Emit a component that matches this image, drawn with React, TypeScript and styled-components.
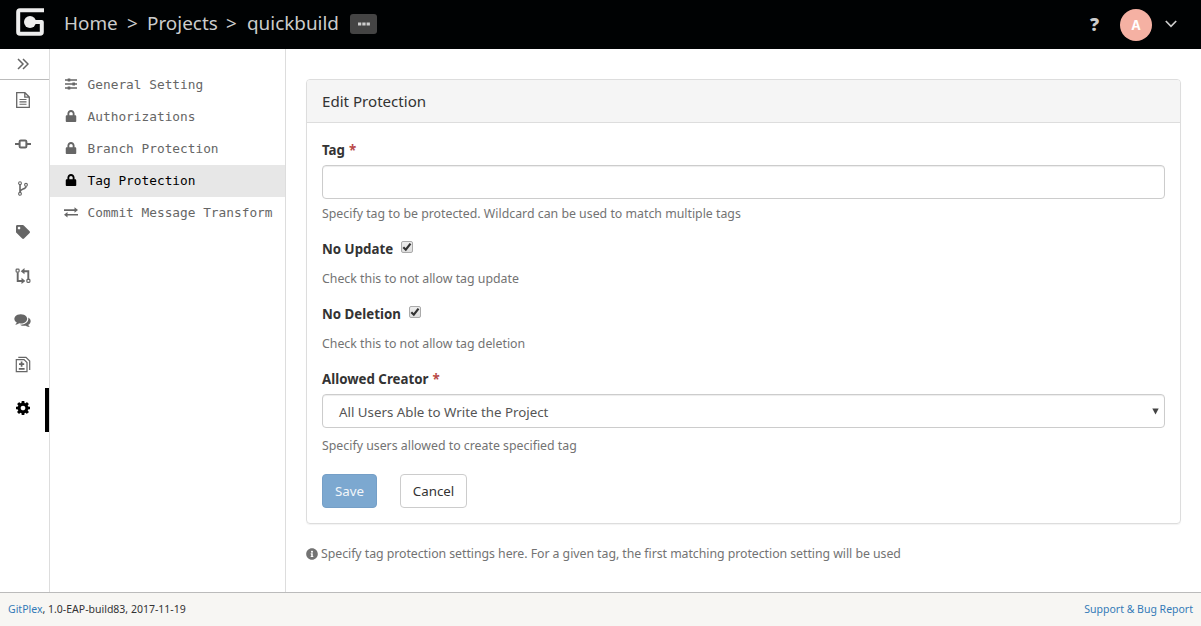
import React from "react";
import styled, { createGlobalStyle } from "styled-components";
import { FaTag, FaLock, FaInfoCircle } from "react-icons/fa";

const Global = createGlobalStyle`
  * { box-sizing: border-box; }
  html, body { margin: 0; padding: 0; }
  body {
    font-family: "Noto Sans", "Open Sans", sans-serif;
    font-size: 13.3px;
    line-height: 20px;
    color: #333;
    background: #fff;
  }
  svg { display: block; }
`;

const Page = styled.div`
  display: flex;
  flex-direction: column;
  height: 626px;
  overflow: hidden;
`;

const Header = styled.header`
  display: flex;
  align-items: center;
  height: 49px;
  flex: none;
  padding: 0 24px 0 15px;
  background: #000203;
  color: #ccc;
`;

const Logo = styled.svg`
  width: 30px;
  height: 30px;
  margin-bottom: 5px;
`;

const Breadcrumb = styled.nav`
  display: flex;
  align-items: center;
  margin: 0 auto 3px 19px;
  font-size: 18.9px;
  line-height: 26px;
`;

const Crumb = styled.span<{ $width: number }>`
  width: ${(p) => p.$width}px;
  white-space: nowrap;
`;

const MoreButton = styled.button`
  display: flex;
  align-items: center;
  justify-content: center;
  width: 27px;
  height: 20px;
  margin-top: 2px;
  padding: 0;
  border: 0;
  border-radius: 3px;
  background: #444;
  color: #ccc;
`;

const Help = styled.span`
  margin: 0 19px 2px 0;
  font-family: "Open Sans", sans-serif;
  font-size: 18px;
  font-weight: 800;
  width: 11px;
`;

const Avatar = styled.span`
  display: flex;
  align-items: center;
  justify-content: center;
  width: 32px;
  height: 32px;
  margin-right: 13px;
  padding-top: 4px;
  border-radius: 50%;
  background: #f5b1a3;
  color: #fff;
  font: 700 15px "Liberation Mono", monospace;
`;

const Body = styled.div`
  display: flex;
  flex: 1;
  min-height: 0;
`;

const Rail = styled.aside`
  width: 50px;
  border-right: 1px solid #ddd;
`;

const RailToggle = styled.div`
  display: flex;
  align-items: center;
  justify-content: center;
  height: 31px;
  padding-right: 3px;
  border-bottom: 1px solid #bbb;
  color: #666;
`;

const RailItem = styled.a<{ $active?: boolean }>`
  display: flex;
  align-items: center;
  justify-content: center;
  height: 44px;
  padding: 0 ${(p) => (p.$active ? 0 : 4)}px 4px 0;
  border-right: ${(p) => (p.$active ? "4px solid #000" : "0")};
  color: ${(p) => (p.$active ? "#000" : "#666")};
`;

const Menu = styled.nav`
  width: 236px;
  padding-top: 20px;
  border-right: 1px solid #ddd;
`;

const MenuItem = styled.a<{ $active?: boolean }>`
  display: flex;
  align-items: center;
  height: 32px;
  padding: 0 0 2px 13px;
  font: 12.8px "DejaVu Sans Mono", monospace;
  white-space: nowrap;
  color: ${(p) => (p.$active ? "#000" : "#666")};
  background: ${(p) => (p.$active ? "#e7e7e7" : "transparent")};
`;

const MenuIcon = styled.span`
  display: flex;
  justify-content: center;
  width: 16px;
  margin-right: 8.600px;
`;

const Main = styled.main`
  flex: 1;
  padding: 30px 20px 0;
`;

const Panel = styled.section`
  border: 1px solid #ddd;
  border-radius: 4px;
  box-shadow: 0 1px 1px rgba(0, 0, 0, 0.05);
`;

const PanelHeading = styled.h3`
  height: 43px;
  margin: 0;
  padding: 0 15px;
  border-bottom: 1px solid #ddd;
  border-radius: 3px 3px 0 0;
  background: #f5f5f5;
  font-size: 15.1px;
  font-weight: 400;
  line-height: 43px;
`;

const Form = styled.form`
  padding: 17px 15px 15px;
`;

const Field = styled.div<{ $after?: number }>`
  margin-bottom: ${(p) => p.$after ?? 15}px;
`;

const Label = styled.label`
  display: flex;
  height: 20px;
  font-size: 13.3px;
  font-weight: 700;
`;

const Required = styled.span`
  margin-left: 4px;
  color: #b94a48;
`;

const Hint = styled.p<{ $gap: number }>`
  margin: ${(p) => p.$gap}px 0 0;
  font-size: 12.33px;
  color: #737373;
`;

const Control = styled.div`
  display: flex;
  align-items: center;
  justify-content: space-between;
  height: 34px;
  margin-top: 5px;
  padding: 1px 5px 0 16px;
  border: 1px solid #ccc;
  border-radius: 4px;
  box-shadow: inset 0 1px 1px rgba(0, 0, 0, 0.075);
  color: #555;
`;

const CheckBox = styled.span`
  display: flex;
  align-items: center;
  justify-content: center;
  width: 12px;
  height: 12px;
  margin: 2px 0 0 8px;
  border: 1px solid #aaa;
  border-radius: 2px;
  background: linear-gradient(#ededed, #dedede);
`;

const Actions = styled.div`
  display: flex;
  gap: 23px;
`;

const Button = styled.button<{ $primary?: boolean }>`
  width: ${(p) => (p.$primary ? 55 : 67)}px;
  height: 34px;
  padding: 0;
  border: 1px solid ${(p) => (p.$primary ? "#759fc7" : "#ccc")};
  border-radius: 4px;
  background: ${(p) => (p.$primary ? "#7ca8d0" : "#fff")};
  color: ${(p) => (p.$primary ? "#f2f6fa" : "#333")};
  font: 13.3px/20px "Noto Sans", sans-serif;
`;

const Note = styled.p`
  display: flex;
  align-items: center;
  gap: 3px;
  margin: 20px 0 0;
  font-size: 12.33px;
  letter-spacing: -0.05px;
  color: #737373;
`;

const Footer = styled.footer`
  display: flex;
  align-items: center;
  justify-content: space-between;
  flex: none;
  height: 34px;
  padding: 0 8px 1px;
  border-top: 1px solid #bbb;
  background: #f7f6f3;
  font-size: 10.5px;
`;

const Link = styled.a`
  color: #337ab7;
`;

const FileIcon = () => (
  <svg width="16" height="18" viewBox="0 0 16 18" fill="none" stroke="currentColor" strokeWidth="1.3">
    <path d="M1.7 1.7h8.2l4.4 4.4v10.2H1.7zM9.8 1.7v4.5h4.5" />
    <path d="M4.5 8.5h7M4.5 10.9h7M4.5 13.300h7" strokeWidth="1.1" />
  </svg>
);

const CommitIcon = () => (
  <svg width="16" height="10" viewBox="0 0 16 10" fill="none" stroke="currentColor" strokeWidth="2">
    <rect x="4.6" y="1.5" width="6.8" height="7" rx="1.2" />
    <path d="M0 5h4.5M11.5 5H16" />
  </svg>
);

const BranchIcon = () => (
  <svg width="10" height="15" viewBox="0 0 10 15" fill="none" stroke="currentColor" strokeWidth="1.1">
    <circle cx="2" cy="2.2" r="1.4" />
    <circle cx="2" cy="12.8" r="1.4" />
    <circle cx="8" cy="3.8" r="1.4" />
    <path d="M2 3.6v7.8M8 5.2c0 3.6-5.6 2.2-6 5.6" strokeWidth="1.6" />
  </svg>
);

const PullRequestIcon = () => (
  <svg width="16" height="16" viewBox="0 0 16 16" fill="none" stroke="currentColor">
    <rect x="1.1" y="1.1" width="3" height="3" rx="0.8" strokeWidth="1.2" />
    <rect x="11.9" y="11.4" width="3" height="3" rx="0.8" strokeWidth="1.2" />
    <path d="M2.7 4.5v8.500h5M13.300 11.200V3.200H8.300" strokeWidth="1.9" />
    <path d="M6.500 9.800v6.200l3.800-3.100zM9.500 0.100v6.200L5.700 3.200z" fill="currentColor" stroke="none" />
  </svg>
);

const CommentsIcon = () => (
  <svg width="17" height="14" viewBox="0 0 1792 1536" fill="currentColor">
    <path d="M1408 640q0 139-94 257t-256.500 186.500T704 1152q-86 0-176-16-124 88-278 128-36 9-86 16h-3q-11 0-20.500-8t-11.500-21q-1-3-1-6.500t.5-6.500 2-6l2.500-5 3.500-5.500 4-5 4.500-5 4-4.500q5-6 23-25t26-29.500 22.500-29 25-38.500 20.500-44Q142 981 71 875T0 640q0-139 94-257t256.500-186.500T704 128t353.500 68.500T1314 383t94 257zm384 256q0 120-71 224.500T1526 1297q10 24 20.500 44t25 38.500 22.500 29 26 29.500 23 25q1 1 4 4.500t4.500 5 4 5 3.500 5.500l2.500 5 2 6 .5 6.500-1 6.500q-3 14-13 22t-22 7q-50-7-86-16-154-40-278-128-90 16-176 16-271 0-472-132 58 4 88 4 161 0 309-45t264-129q125-92 192-212t67-254q0-77-23-152 129 71 204 178t75 230z" />
  </svg>
);

const CompareIcon = () => (
  <svg width="16" height="17" viewBox="0 0 16 17" fill="none" stroke="currentColor" strokeWidth="1.2">
    <path d="M1.300 3.600h7.700l3 3v9.100H1.300z" />
    <path d="M3.300 1.300h7.700l3.700 3.700v9.100" />
    <path d="M6.600 5.500v5.200M4 8.100h5.200M3.800 12.900h5.800" strokeWidth="1.700" />
  </svg>
);

const CogIcon = () => (
  <svg width="14" height="14" viewBox="0 0 1536 1536" fill="currentColor">
    <path d="M1024 768q0-106-75-181t-181-75-181 75-75 181 75 181 181 75 181-75 75-181zm512-109v222q0 12-8 23t-20 13l-185 28q-19 54-39 91 35 50 107 138 10 12 10 25t-9 23q-27 37-99 108t-94 71q-12 0-26-9l-138-108q-44 23-91 38-16 136-29 186-7 28-36 28H657q-14 0-24.500-8.500T621 1506l-28-184q-49-16-90-37l-141 107q-10 9-25 9-14 0-25-11-126-114-165-168-7-10-7-23 0-12 8-23 15-21 51-66.500t54-70.500q-27-50-41-99L29 913q-13-2-21-12.500T0 877V655q0-12 8-23t19-13l186-28q14-46 39-92-40-57-107-138-10-12-10-24 0-10 9-23 26-36 98.500-107.500T337 135q13 0 26 10l138 107q44-23 91-38 16-136 29-186 7-28 36-28h222q14 0 24.500 8.500T915 30l28 184q49 16 90 37l142-107q9-9 24-9 13 0 25 10 129 119 165 170 7 8 7 22 0 12-8 23-15 21-51 66.500t-54 70.500q26 50 41 98l183 28q13 2 21 12.500t8 23.500z" />
  </svg>
);

const SlidersIcon = () => (
  <svg width="12" height="12" viewBox="0 0 12 12" fill="none" stroke="currentColor">
    <path d="M0 2h12M0 6h12M0 10h12" strokeWidth="1.3" />
    <path d="M4 .5v3M8.700 4.500v3M4 8.500v3" strokeWidth="2.600" />
  </svg>
);

const ExchangeIcon = () => (
  <svg width="14" height="11" viewBox="0 0 14 11" fill="currentColor">
    <path d="M0 2.200h10.500V.2L14 3l-3.500 2.800V3.900H0zM14 6.900H3.500V5L0 7.800l3.500 2.800V8.600H14z" />
  </svg>
);

const LockIcon = () => <FaLock size={12} />;

const RAIL = [
  FileIcon,
  CommitIcon,
  BranchIcon,
  () => <FaTag size={14} />,
  PullRequestIcon,
  CommentsIcon,
  CompareIcon,
  CogIcon,
];

const MENU = [
  { text: "General Setting", Icon: SlidersIcon },
  { text: "Authorizations", Icon: LockIcon },
  { text: "Branch Protection", Icon: LockIcon },
  { text: "Tag Protection", Icon: LockIcon, active: true },
  { text: "Commit Message Transform", Icon: ExchangeIcon },
];

const Checked = () => (
  <CheckBox role="checkbox" aria-checked="true">
    <svg width="10" height="10" viewBox="0 0 10 10" fill="none" stroke="#333" strokeWidth="2.2">
      <path d="M1.300 5.300l2.500 2.400L8.500 1.600" />
    </svg>
  </CheckBox>
);

export default function App() {
  return (
    <Page>
      <Global />
      <Header>
        <Logo viewBox="0 0 30 30" fill="none" stroke="#eee" strokeWidth="4">
          <path d="M29 3.200H5Q3.200 3.200 3.200 5V25Q3.200 26.800 5 26.800H25Q26.800 26.800 26.800 25V14.900H15" strokeLinejoin="round" />
          <circle cx="15" cy="15" r="6" fill="#eee" stroke="none" />
        </Logo>
        <Breadcrumb>
          <Crumb $width={63}>Home</Crumb>
          <Crumb $width={20}>&gt;</Crumb>
          <Crumb $width={79}>Projects</Crumb>
          <Crumb $width={21}>&gt;</Crumb>
          <Crumb $width={103}>quickbuild</Crumb>
          <MoreButton>
            <svg width="12" height="4" viewBox="0 0 12 4" fill="currentColor">
              <path d="M0 .5h3.300v3H0zM4.300 .5h3.300v3H4.300zM8.600 .5h3.300v3H8.600z" />
            </svg>
          </MoreButton>
        </Breadcrumb>
        <Help>?</Help>
        <Avatar>A</Avatar>
        <svg width="12" height="10" viewBox="0 0 12 10" fill="none" stroke="#ccc" strokeWidth="1.7">
          <path d="M.8 1L6 6.300 11.200 1" />
        </svg>
      </Header>
      <Body>
        <Rail>
          <RailToggle>
            <svg width="12" height="12" viewBox="0 0 12 12" fill="none" stroke="currentColor" strokeWidth="1.500">
              <path d="M1 1l5 5-5 5M6 1l5 5-5 5" />
            </svg>
          </RailToggle>
          {RAIL.map((Icon, i) => (
            <RailItem key={i} $active={i === RAIL.length - 1}>
              <Icon />
            </RailItem>
          ))}
        </Rail>
        <Menu>
          {MENU.map(({ text, Icon, active }) => (
            <MenuItem key={text} $active={active}>
              <MenuIcon>
                <Icon />
              </MenuIcon>
              {text}
            </MenuItem>
          ))}
        </Menu>
        <Main>
          <Panel>
            <PanelHeading>Edit Protection</PanelHeading>
            <Form>
              <Field>
                <Label>
                  Tag<Required>*</Required>
                </Label>
                <Control />
                <Hint $gap={5}>Specify tag to be protected. Wildcard can be used to match multiple tags</Hint>
              </Field>
              <Field>
                <Label>
                  No Update
                  <Checked />
                </Label>
                <Hint $gap={10}>Check this to not allow tag update</Hint>
              </Field>
              <Field>
                <Label>
                  No Deletion
                  <Checked />
                </Label>
                <Hint $gap={10}>Check this to not allow tag deletion</Hint>
              </Field>
              <Field $after={18}>
                <Label>
                  Allowed Creator<Required>*</Required>
                </Label>
                <Control>
                  All Users Able to Write the Project
                  <svg width="7" height="7" viewBox="0 0 7 7" fill="#444">
                    <path d="M.3 .5h6.400L3.500 6.500z" />
                  </svg>
                </Control>
                <Hint $gap={8}>Specify users allowed to create specified tag</Hint>
              </Field>
              <Actions>
                <Button type="button" $primary>
                  Save
                </Button>
                <Button type="button">Cancel</Button>
              </Actions>
            </Form>
          </Panel>
          <Note>
            <FaInfoCircle size={12} />
            Specify tag protection settings here. For a given tag, the first matching protection setting will be used
          </Note>
        </Main>
      </Body>
      <Footer>
        <span>
          <Link>GitPlex</Link>, 1.0-EAP-build83, 2017-11-19
        </span>
        <Link>Support &amp; Bug Report</Link>
      </Footer>
    </Page>
  );
}
